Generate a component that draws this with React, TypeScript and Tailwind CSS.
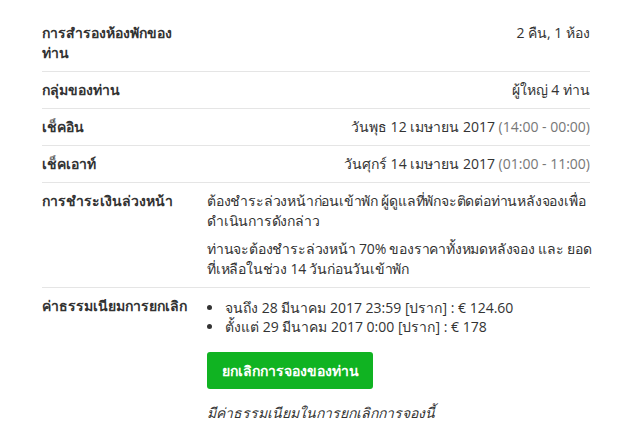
import React from "react";

function Row({ label, children, align = "right", last = false }: { label: string; children: React.ReactNode; align?: "right" | "left"; last?: boolean }) {
  return (
    <div className={`flex py-2 ${last ? "" : "border-b border-[#e5e5e5]"}`}>
      <div className="w-[165px] shrink-0 pr-4 font-bold text-[#333]">{label}</div>
      <div className={`flex-1 ${align === "right" ? "text-right" : "text-left"}`}>{children}</div>
    </div>
  );
}

function Bullet({ children }: { children: React.ReactNode }) {
  return (
    <li className="flex items-center leading-[19px]">
      <span className="flex w-[18px] shrink-0 items-center">
        <span className="block h-[5px] w-[5px] rounded-full bg-[#333]" />
      </span>
      <span>{children}</span>
    </li>
  );
}

export default function App() {
  return (
    <div
      className="bg-white min-h-[435px] pl-[42px] pr-[41px] pt-[15px] text-[14px] leading-[20px] text-[#333]"
      style={{ fontFamily: '"Open Sans", "Noto Sans", sans-serif' }}
    >
      <Row label="การสำรองห้องพักของท่าน">
        <div className="pb-5">2 คืน, 1 ห้อง</div>
      </Row>
      <Row label="กลุ่มของท่าน">ผู้ใหญ่ 4 ท่าน</Row>
      <Row label="เช็คอิน">
        วันพุธ 12 เมษายน 2017 <span className="text-[#777]">(14:00 - 00:00)</span>
      </Row>
      <Row label="เช็คเอาท์">
        วันศุกร์ 14 เมษายน 2017 <span className="text-[#777]">(01:00 - 11:00)</span>
      </Row>
      <Row label="การชำระเงินล่วงหน้า" align="left">
        <p className="whitespace-nowrap tracking-[-0.2px]">
          ต้องชำระล่วงหน้าก่อนเข้าพัก ผู้ดูแลที่พักจะติดต่อท่านหลังจองเพื่อ
          <br />
          ดำเนินการดังกล่าว
        </p>
        <p className="mt-2 whitespace-nowrap tracking-[-0.2px]">
          ท่านจะต้องชำระล่วงหน้า 70% ของราคาทั้งหมดหลังจอง และ ยอด
          <br />
          ที่เหลือในช่วง 14 วันก่อนวันเข้าพัก
        </p>
      </Row>
      <Row label="ค่าธรรมเนียมการยกเลิก" align="left" last>
        <ul className="mt-[2px]">
          <Bullet>จนถึง 28 มีนาคม 2017 23:59 [ปราก] : € 124.60</Bullet>
          <Bullet>ตั้งแต่ 29 มีนาคม 2017 0:00 [ปราก] : € 178</Bullet>
        </ul>
        <button className="mt-[16px] h-[37px] w-[166px] rounded-[3px] bg-[#10b322] font-bold text-white">
          ยกเลิกการจองของท่าน
        </button>
        <p className="mt-[14px] italic">มีค่าธรรมเนียมในการยกเลิกการจองนี้</p>
      </Row>
    </div>
  );
}
